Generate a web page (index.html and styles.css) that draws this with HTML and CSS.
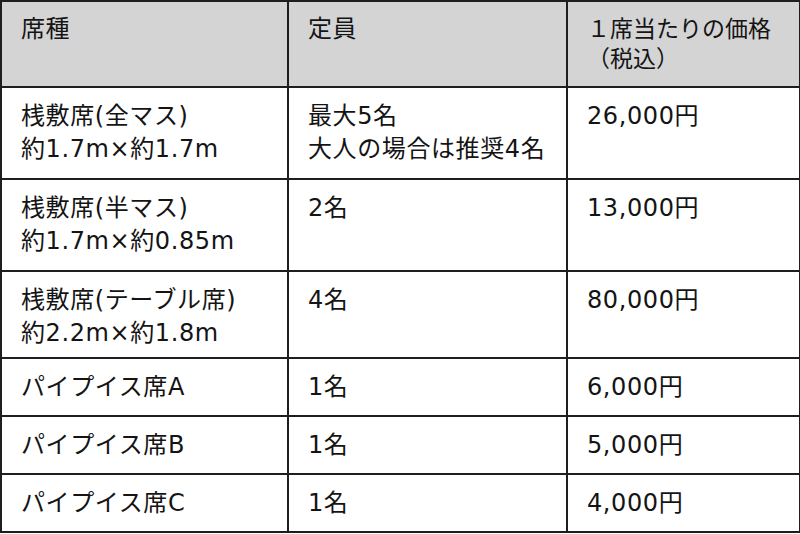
FILE: index.html
```html
<!DOCTYPE html>
<html lang="ja">
<head>
<meta charset="utf-8">
<link rel="stylesheet" href="styles.css">
</head>
<body>
<table class="seats">
  <colgroup>
    <col class="c1"><col class="c2"><col class="c3">
  </colgroup>
  <thead>
    <tr class="head">
      <th>席種</th>
      <th>定員</th>
      <th class="price-head">１席当たりの価格<br>（税込）</th>
    </tr>
  </thead>
  <tbody>
    <tr class="r-tall">
      <td>桟敷席(全マス)<br>約1.7m×約1.7m</td>
      <td>最大5名<br>大人の場合は推奨4名</td>
      <td>26,000円</td>
    </tr>
    <tr class="r-tall">
      <td>桟敷席(半マス)<br>約1.7m×約0.85m</td>
      <td>2名</td>
      <td>13,000円</td>
    </tr>
    <tr class="r-mid">
      <td>桟敷席(テーブル席)<br>約2.2m×約1.8m</td>
      <td>4名</td>
      <td>80,000円</td>
    </tr>
    <tr class="r-one">
      <td>パイプイス席A</td>
      <td>1名</td>
      <td>6,000円</td>
    </tr>
    <tr class="r-one">
      <td>パイプイス席B</td>
      <td>1名</td>
      <td>5,000円</td>
    </tr>
    <tr class="r-one">
      <td>パイプイス席C</td>
      <td>1名</td>
      <td>4,000円</td>
    </tr>
  </tbody>
</table>
</body>
</html>
```
FILE: styles.css
```css
html, body {
  margin: 0;
  padding: 0;
  background: #ffffff;
}
.seats {
  border-collapse: collapse;
  table-layout: fixed;
  width: 799px;
  margin: 0;
  font-family: "DejaVu Sans", "Noto Sans CJK JP", sans-serif;
  font-size: 24px;
  letter-spacing: 0.6px;
  color: #141414;
}
.c1 { width: 287px; }
.c2 { width: 279px; }
.c3 { width: 233px; }
.seats th,
.seats td {
  border: 2px solid #1e1e1e;
  vertical-align: top;
  text-align: left;
  font-weight: normal;
  padding: 12px 8px 0 19px;
  line-height: 33px;
  white-space: nowrap;
}
.head th {
  background: #d4d4d4;
  line-height: 30px;
  padding-top: 12px;
}
.head .price-head {
  font-size: 23px;
  letter-spacing: 0;
}
.head { height: 86px; }
.r-tall { height: 92px; }
.r-mid { height: 87px; }
.r-one { height: 58px; }
```
